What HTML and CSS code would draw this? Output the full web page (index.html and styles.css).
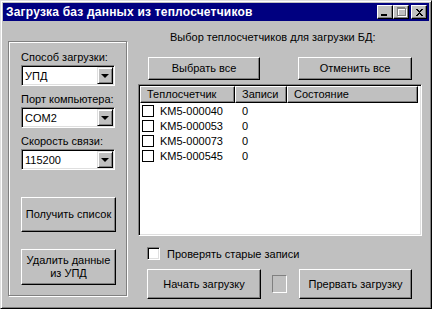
FILE: index.html
```html
<!DOCTYPE html>
<html lang="ru">
<head>
  <meta charset="UTF-8">
  <title>Загрузка баз данных из теплосчетчиков</title>
  <link rel="stylesheet" href="styles.css">
</head>
<body>
  <div class="window">
    <div class="titlebar">
      <span class="title">Загрузка баз данных из теплосчетчиков</span>
      <div class="title-buttons">
        <span class="tbtn"><svg width="14" height="12" viewBox="0 0 14 12" shape-rendering="crispEdges"><rect x="3" y="8" width="6" height="2" fill="#000"/></svg></span>
        <span class="tbtn"><svg width="14" height="12" viewBox="0 0 14 12" shape-rendering="crispEdges"><g fill="none"><path d="M4 2.5h8M4 3.5h8" stroke="#fff"/><rect x="4.5" y="3.5" width="8" height="7" stroke="#fff"/><path d="M3 1.5h8M3 2.5h8" stroke="#808080"/><rect x="3.5" y="2.5" width="8" height="7" stroke="#808080"/></g></svg></span>
        <span class="tbtn tbtn-close"><svg width="14" height="12" viewBox="0 0 14 12" shape-rendering="crispEdges"><path d="M4 3h2v1h1v1h1v-1h1v-1h2v1h-1v1h-1v1h-1v1h1v1h1v1h1v1h-2v-1h-1v-1h-1v1h-1v1h-2v-1h1v-1h1v-1h1v-1h-1v-1h-1v-1h-1z" fill="#000"/></svg></span>
      </div>
    </div>

    <div class="content">
      <div class="groupbox">
        <div class="field">
          <label class="field-label">Способ загрузки:</label>
          <div class="combo"><span class="combo-value">УПД</span><span class="combo-btn"><span class="arrow"></span></span></div>
        </div>
        <div class="field">
          <label class="field-label">Порт компьютера:</label>
          <div class="combo"><span class="combo-value">COM2</span><span class="combo-btn"><span class="arrow"></span></span></div>
        </div>
        <div class="field field-last">
          <label class="field-label">Скорость связи:</label>
          <div class="combo"><span class="combo-value">115200</span><span class="combo-btn"><span class="arrow"></span></span></div>
        </div>
        <button class="btn btn-list">Получить список</button>
        <button class="btn btn-delete">Удалить данные<br>из УПД</button>
      </div>

      <div class="panel">
        <div class="panel-caption">Выбор теплосчетчиков для загрузки БД:</div>
        <div class="select-row">
          <button class="btn btn-select">Выбрать все</button>
          <button class="btn btn-cancel">Отменить все</button>
        </div>

        <div class="listview">
          <div class="lv-header">
            <div class="lv-col col-meter">Теплосчетчик</div>
            <div class="lv-col col-records">Записи</div>
            <div class="lv-col col-state">Состояние</div>
          </div>
          <div class="lv-row"><span class="lv-check"></span><span class="lv-name">KM5-000040</span><span>0</span></div>
          <div class="lv-row"><span class="lv-check"></span><span class="lv-name">KM5-000053</span><span>0</span></div>
          <div class="lv-row"><span class="lv-check"></span><span class="lv-name">KM5-000073</span><span>0</span></div>
          <div class="lv-row"><span class="lv-check"></span><span class="lv-name">KM5-000545</span><span>0</span></div>
        </div>

        <label class="check-row"><span class="checkbox"></span>Проверять старые записи</label>

        <div class="action-row">
          <button class="btn btn-start">Начать загрузку</button>
          <span class="indicator"></span>
          <button class="btn btn-stop">Прервать загрузку</button>
        </div>
      </div>
    </div>
  </div>
</body>
</html>
```

FILE: styles.css
```css
* {
  box-sizing: border-box;
}
body {
  margin: 0;
  padding: 0;
  background-color: #c0c0c0;
  font-family: "Liberation Sans", Arial, sans-serif;
  font-size: 11px;
  color: #000;
}
.window {
  width: 432px;
  height: 309px;
  padding: 2px;
  background-color: #c0c0c0;
  border: 1px solid;
  border-color: #dfdfdf #000 #000 #dfdfdf;
  box-shadow: inset 1px 1px #fff, inset -1px -1px #808080;
  display: flex;
  flex-direction: column;
}
.titlebar {
  height: 18px;
  background-color: #000080;
  color: #fff;
  display: flex;
  align-items: center;
  justify-content: space-between;
  padding: 0 2px 0 3px;
}
.title {
  font-weight: bold;
  font-size: 12px;
  letter-spacing: 0.2px;
}
.title-buttons {
  display: flex;
}
.tbtn {
  width: 16px;
  height: 14px;
  background-color: #c0c0c0;
  border: 1px solid;
  border-color: #fff #000 #000 #fff;
  box-shadow: inset -1px -1px #808080;
  display: flex;
}
.tbtn-close {
  margin-left: 2px;
}

.content {
  display: flex;
  padding: 20px 0 0 5px;
}

/* left group */
.groupbox {
  width: 119px;
  height: 255px;
  border: 1px solid #808080;
  box-shadow: inset 1px 1px #fff, 1px 1px #fff;
  padding: 9px 0 0 12px;
  display: flex;
  flex-direction: column;
}
.field {
  display: flex;
  flex-direction: column;
  margin-bottom: 7px;
}
.field-last {
  margin-bottom: 27px;
}
.field-label {
  height: 13px;
  line-height: 13px;
  margin-bottom: 1px;
}
.combo {
  width: 94px;
  height: 21px;
  background-color: #fff;
  border: 1px solid;
  border-color: #808080 #fff #fff #808080;
  box-shadow: inset 1px 1px #000, inset -1px -1px #dfdfdf;
  padding: 1px;
  display: flex;
  align-items: center;
}
.combo-value {
  flex: 1;
  padding-left: 2px;
}
.combo-btn {
  width: 16px;
  height: 17px;
  background-color: #c0c0c0;
  border: 1px solid;
  border-color: #dfdfdf #000 #000 #dfdfdf;
  box-shadow: inset 1px 1px #fff, inset -1px -1px #808080;
  display: flex;
  align-items: center;
  justify-content: center;
}
.arrow {
  width: 0;
  height: 0;
  border-left: 4px solid transparent;
  border-right: 4px solid transparent;
  border-top: 4px solid #000;
}

.btn {
  font-family: "Liberation Sans", Arial, sans-serif;
  font-size: 11px;
  line-height: 13px;
  color: #000;
  background-color: #c0c0c0;
  border: 1px solid;
  border-color: #fff #000 #000 #fff;
  box-shadow: inset -1px -1px #808080;
  padding: 0;
}
.btn-list {
  width: 95px;
  height: 35px;
}
.btn-delete {
  width: 95px;
  height: 36px;
  margin-top: 17px;
}

/* right panel */
.panel {
  width: 284px;
  margin-left: 11px;
  margin-top: -10px;
  display: flex;
  flex-direction: column;
}
.panel-caption {
  height: 13px;
  line-height: 13px;
  margin-left: 32px;
}
.select-row {
  display: flex;
  margin: 13px 0 0 10px;
}
.btn-select {
  width: 112px;
  height: 23px;
}
.btn-cancel {
  width: 114px;
  height: 23px;
  margin-left: 38px;
}
.listview {
  height: 152px;
  margin-top: 4px;
  background-color: #fff;
  border: 1px solid;
  border-color: #808080 #fff #fff #808080;
  box-shadow: inset 1px 1px #000, inset -1px -1px #dfdfdf;
  padding: 1px;
}
.lv-header {
  display: flex;
  height: 17px;
}
.lv-col {
  height: 17px;
  line-height: 14px;
  padding-left: 6px;
  background-color: #c0c0c0;
  border: 1px solid;
  border-color: #fff #000 #000 #fff;
  box-shadow: inset -1px -1px #808080;
}
.col-meter {
  width: 95px;
}
.col-records {
  width: 52px;
}
.col-state {
  width: 131px;
}
.lv-row {
  height: 15px;
  display: flex;
  align-items: center;
  padding-left: 2px;
}
.lv-check {
  width: 12px;
  height: 12px;
  border: 1px solid #000;
  margin-right: 6px;
}
.lv-name {
  width: 82px;
}
.check-row {
  display: flex;
  align-items: center;
  height: 13px;
  margin: 11px 0 0 9px;
}
.checkbox {
  width: 13px;
  height: 13px;
  background-color: #fff;
  border: 1px solid;
  border-color: #808080 #fff #fff #808080;
  box-shadow: inset 1px 1px #000, inset -1px -1px #dfdfdf;
  margin-right: 7px;
}
.action-row {
  display: flex;
  align-items: center;
  margin: 9px 0 0 9px;
}
.btn-start {
  width: 114px;
  height: 30px;
}
.indicator {
  width: 15px;
  height: 18px;
  margin-left: 11px;
  border: 1px solid;
  border-color: #808080 #fff #fff #808080;
}
.btn-stop {
  width: 113px;
  height: 30px;
  margin-left: 12px;
}
```
